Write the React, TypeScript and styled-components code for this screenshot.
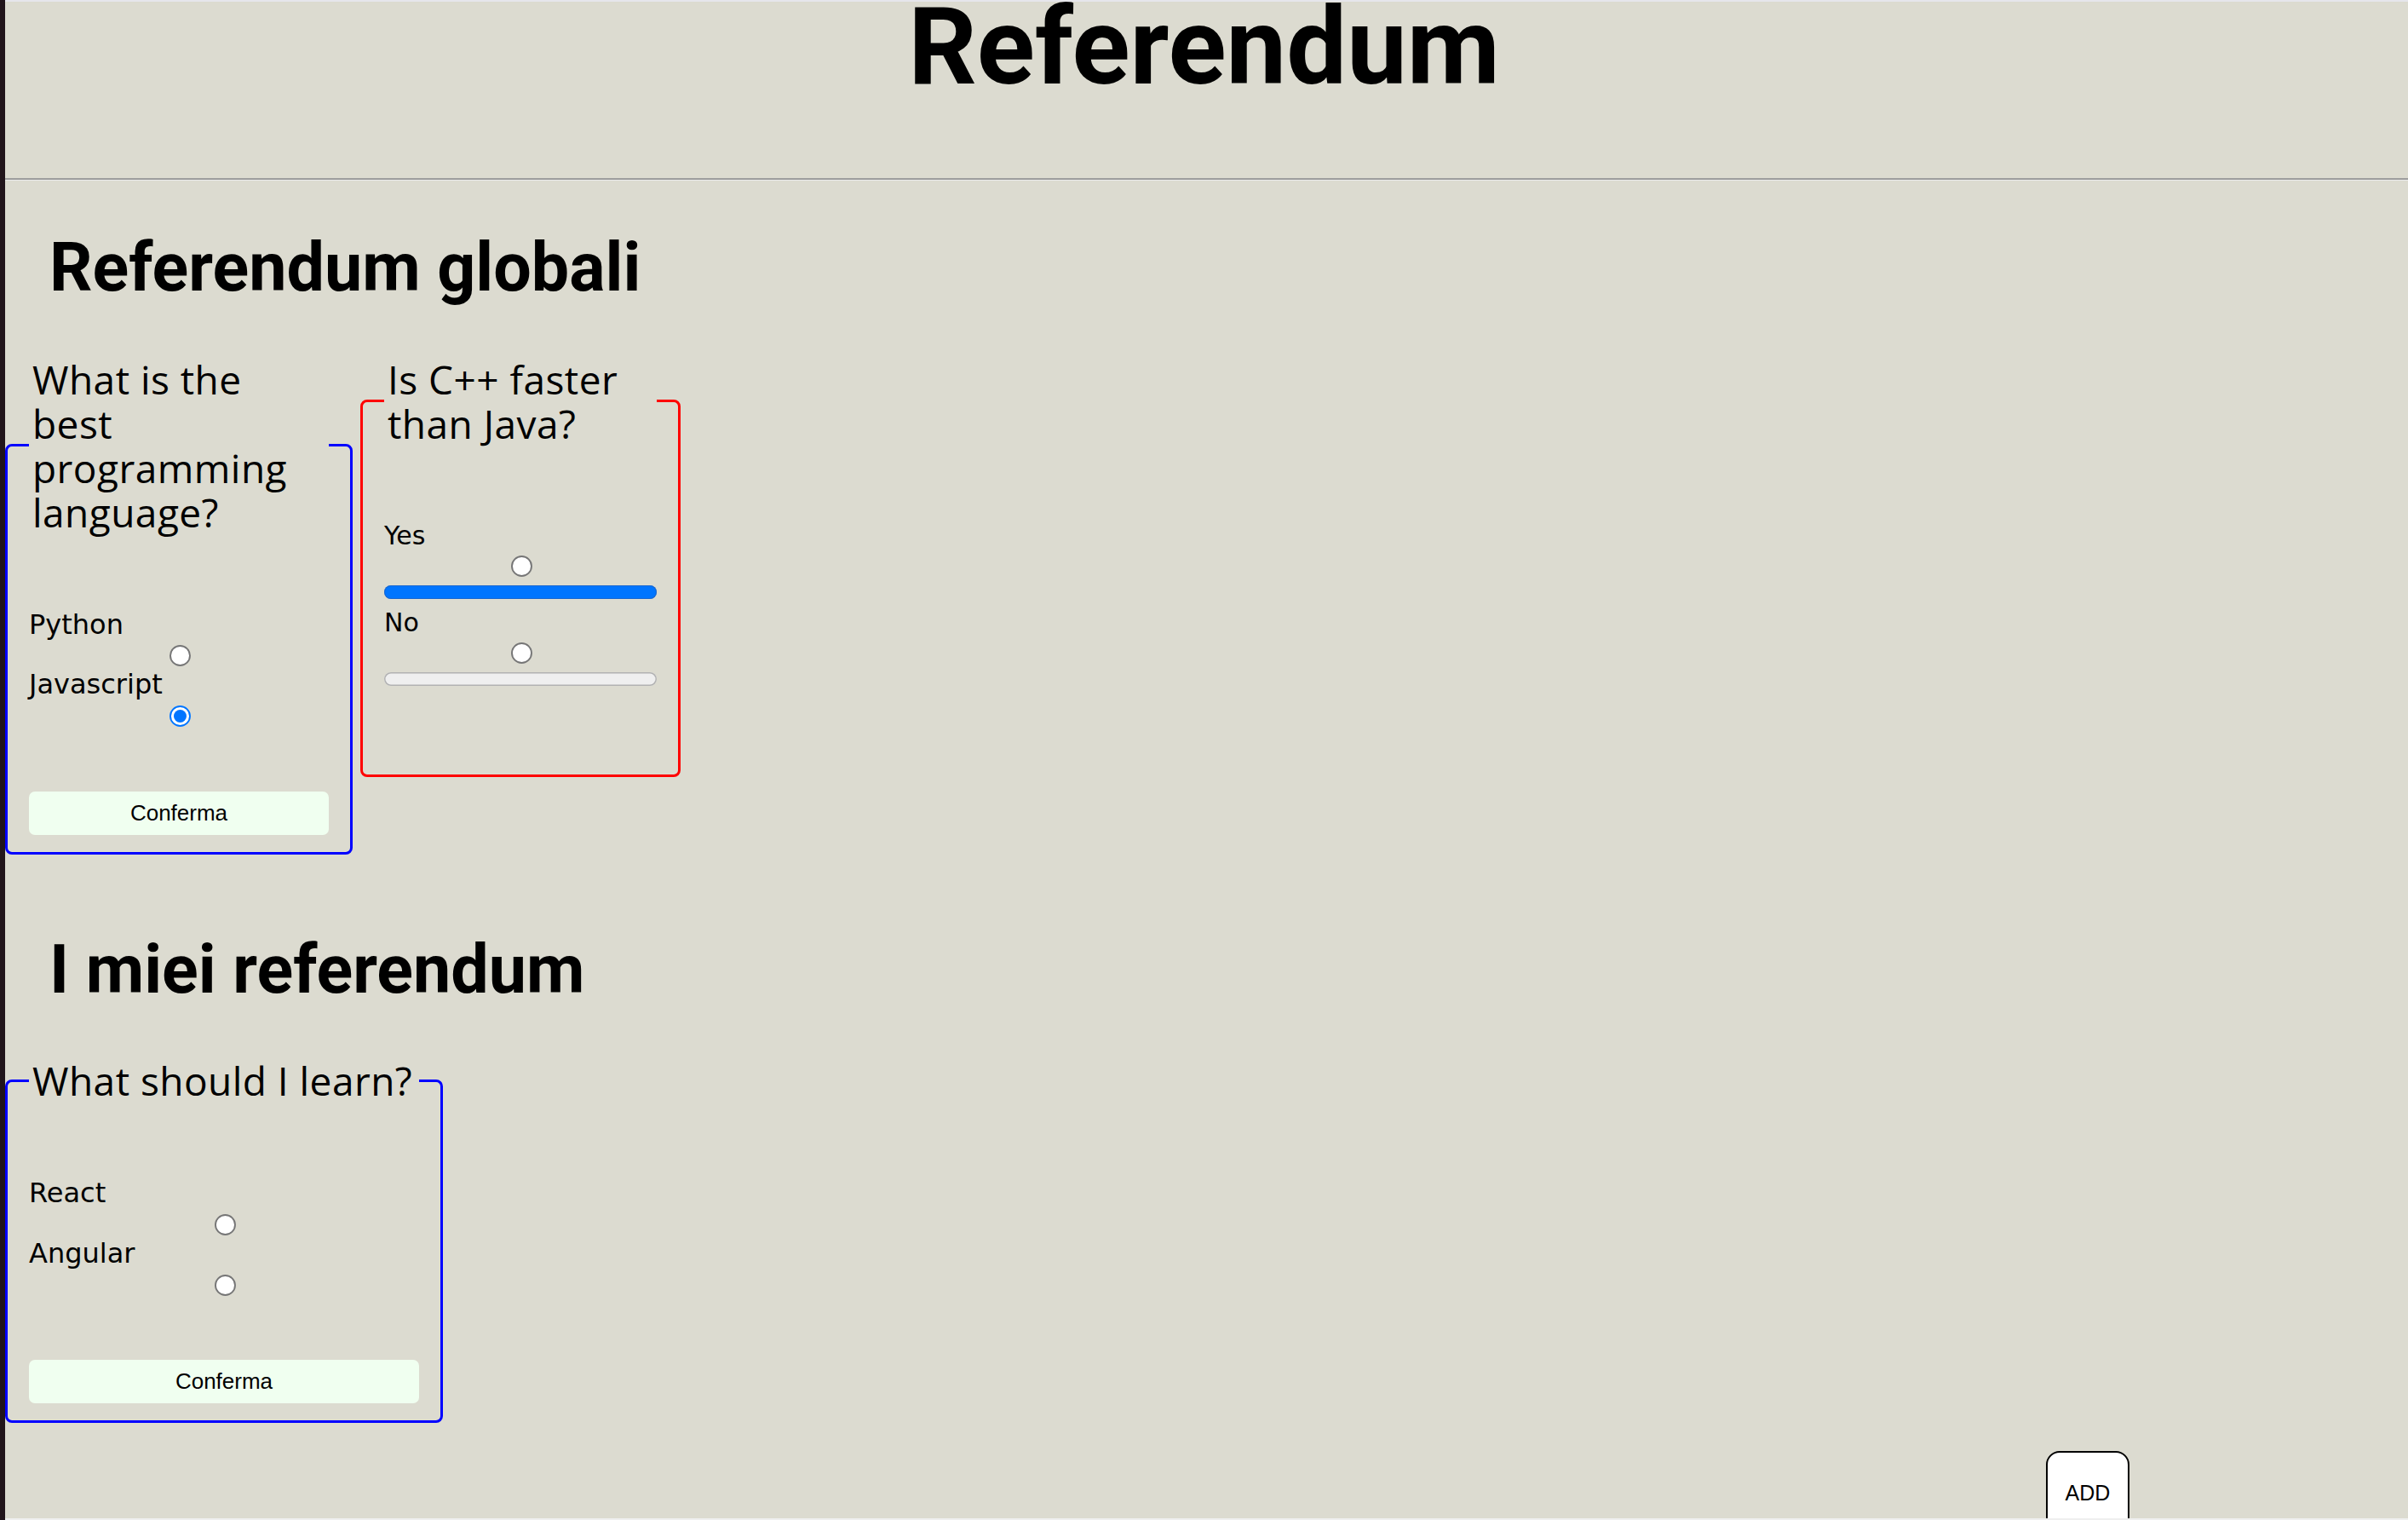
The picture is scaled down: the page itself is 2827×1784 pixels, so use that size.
import React from 'react';
import styled, { createGlobalStyle } from 'styled-components';

const GlobalStyle = createGlobalStyle`
  html, body {
    margin: 0;
    padding: 0;
    height: 100%;
    overflow: hidden;
  }
  body {
    background: #21151b;
    font-family: "DejaVu Sans", sans-serif;
  }
  #root {
    height: 100%;
  }
  *, *::before, *::after {
    box-sizing: border-box;
  }
`;

const Shell = styled.div`
  display: flex;
  height: 100vh;
  overflow: hidden;
`;

const SideStrip = styled.div`
  flex: 0 0 6px;
  background: #21151b;
`;

const Main = styled.main`
  position: relative;
  flex: 1;
  min-width: 0;
  background: #dcdbd0;
  border-top: 2px solid #e6e6eb;
  overflow: hidden;
`;

const BottomEdge = styled.div`
  position: absolute;
  left: 0;
  right: 0;
  bottom: 0;
  height: 2px;
  background: #efefef;
`;

const PageTitle = styled.h1`
  margin: 0;
  padding-right: 6px;
  font-family: Roboto, "Liberation Sans", sans-serif;
  font-weight: 700;
  font-size: 126px;
  line-height: 106px;
  text-align: center;
  color: #000;
`;

const Divider = styled.hr`
  margin: 101px 0 0;
  height: 0;
  border: 0;
  border-top: 2px solid #9d9d9d;
  border-bottom: 1px solid #ebebeb;
`;

const Section = styled.section`
  padding-bottom: 33px;
`;

const SectionTitle = styled.h2`
  margin: 56px 0 57.5px 52px;
  font-family: Roboto, "Liberation Sans", sans-serif;
  font-weight: 700;
  font-size: 79px;
  line-height: 93px;
  color: #000;
`;

const CardRow = styled.div`
  display: flex;
  align-items: flex-start;
  gap: 9px;
`;

const Card = styled.fieldset<{ $accent: string; $width: number; $tail: number }>`
  margin: 0;
  min-width: 0;
  width: ${(p) => p.$width + 56}px;
  padding: 0 25px ${(p) => p.$tail}px;
  border: 3px solid ${(p) => p.$accent};
  border-radius: 8px;
`;

const Question = styled.legend`
  width: 100%;
  padding: 0 4px;
  font-family: "Open Sans", "Noto Sans", sans-serif;
  font-weight: 400;
  font-size: 46px;
  line-height: 52px;
  letter-spacing: 0.01em;
  color: #000;
`;

const Choices = styled.div<{ $offset: number }>`
  display: flex;
  flex-direction: column;
  margin-top: ${(p) => p.$offset}px;
`;

const ChoiceLabel = styled.label<{ $size: number; $gap?: number }>`
  align-self: flex-start;
  margin-top: ${(p) => p.$gap ?? 0}px;
  font-family: "DejaVu Sans", sans-serif;
  font-size: ${(p) => p.$size}px;
  line-height: ${(p) => Math.round(p.$size * 1.19)}px;
  color: #000;
`;

const Radio = styled.input`
  zoom: 1.92;
  align-self: center;
  margin: 3px 3px 1px 5px;
`;

const Tally = styled.progress`
  -webkit-appearance: none;
  appearance: none;
  display: block;
  width: 100%;
  height: 16px;
  margin: 7.9px 0 0;
  border: 0;
  border-radius: 8px;
  background: transparent;

  &::-webkit-progress-bar {
    background: #efefef;
    border-radius: 8px;
    box-shadow: inset 0 0 0 1.5px #b2b2b2;
  }
  &::-webkit-progress-value {
    background: #0075ff;
    border-radius: 8px;
    box-shadow: inset 0 0 0 1px rgba(40, 90, 170, 0.55);
  }
`;

const SubmitButton = styled.button`
  display: block;
  width: 100%;
  height: 51px;
  margin-top: 74px;
  padding: 0;
  border: 0;
  border-radius: 7px;
  background: #f0fff0;
  font-family: "Liberation Sans", Arial, sans-serif;
  font-size: 26px;
  color: #000;
`;

const Footer = styled.div`
  display: flex;
  justify-content: flex-end;
  padding-right: 327px;
`;

const AddButton = styled.button`
  width: 98px;
  height: 99px;
  padding: 0;
  border: 2px solid #000;
  border-radius: 16px;
  background: #fff;
  font-family: "Liberation Sans", Arial, sans-serif;
  font-size: 25px;
  color: #000;
`;

type VoteData = {
  id: string;
  question: string;
  accent: string;
  width: number;
  options: string[];
  checked?: string;
};

type ResultData = {
  id: string;
  question: string;
  accent: string;
  width: number;
  results: { label: string; share: number }[];
};

const VoteCard = ({ data }: { data: VoteData }) => (
  <Card $accent={data.accent} $width={data.width} $tail={20}>
    <Question>{data.question}</Question>
    <Choices $offset={87}>
      {data.options.map((opt) => (
        <React.Fragment key={opt}>
          <ChoiceLabel $size={32} htmlFor={`${data.id}-${opt}`}>
            {opt}
          </ChoiceLabel>
          <Radio
            type="radio"
            id={`${data.id}-${opt}`}
            name={data.id}
            value={opt}
            defaultChecked={data.checked === opt}
          />
        </React.Fragment>
      ))}
    </Choices>
    <SubmitButton type="button">Conferma</SubmitButton>
  </Card>
);

const ResultCard = ({ data }: { data: ResultData }) => (
  <Card $accent={data.accent} $width={data.width} $tail={104}>
    <Question>{data.question}</Question>
    <Choices $offset={88}>
      {data.results.map((r, i) => (
        <React.Fragment key={r.label}>
          <ChoiceLabel $size={30} $gap={i === 0 ? 0 : 9.6} htmlFor={`${data.id}-${r.label}`}>
            {r.label}
          </ChoiceLabel>
          <Radio type="radio" id={`${data.id}-${r.label}`} name={data.id} value={r.label} />
          <Tally value={r.share} max={1} />
        </React.Fragment>
      ))}
    </Choices>
  </Card>
);

const globalVote: VoteData = {
  id: 'best-language',
  question: 'What is the best programming language?',
  accent: '#0000ff',
  width: 352,
  options: ['Python', 'Javascript'],
  checked: 'Javascript',
};

const globalResult: ResultData = {
  id: 'cpp-java',
  question: 'Is C++ faster than Java?',
  accent: '#ff0000',
  width: 320,
  results: [
    { label: 'Yes', share: 1 },
    { label: 'No', share: 0 },
  ],
};

const myVote: VoteData = {
  id: 'learn',
  question: 'What should I learn?',
  accent: '#0000ff',
  width: 458,
  options: ['React', 'Angular'],
};

export default function App() {
  return (
    <>
      <GlobalStyle />
      <Shell>
        <SideStrip />
        <Main>
          <PageTitle>Referendum</PageTitle>
          <Divider />
          <Section>
            <SectionTitle>Referendum globali</SectionTitle>
            <CardRow>
              <VoteCard data={globalVote} />
              <ResultCard data={globalResult} />
            </CardRow>
          </Section>
          <Section>
            <SectionTitle>I miei referendum</SectionTitle>
            <CardRow>
              <VoteCard data={myVote} />
            </CardRow>
          </Section>
          <Footer>
            <AddButton type="button">ADD</AddButton>
          </Footer>
          <BottomEdge />
        </Main>
      </Shell>
    </>
  );
}
